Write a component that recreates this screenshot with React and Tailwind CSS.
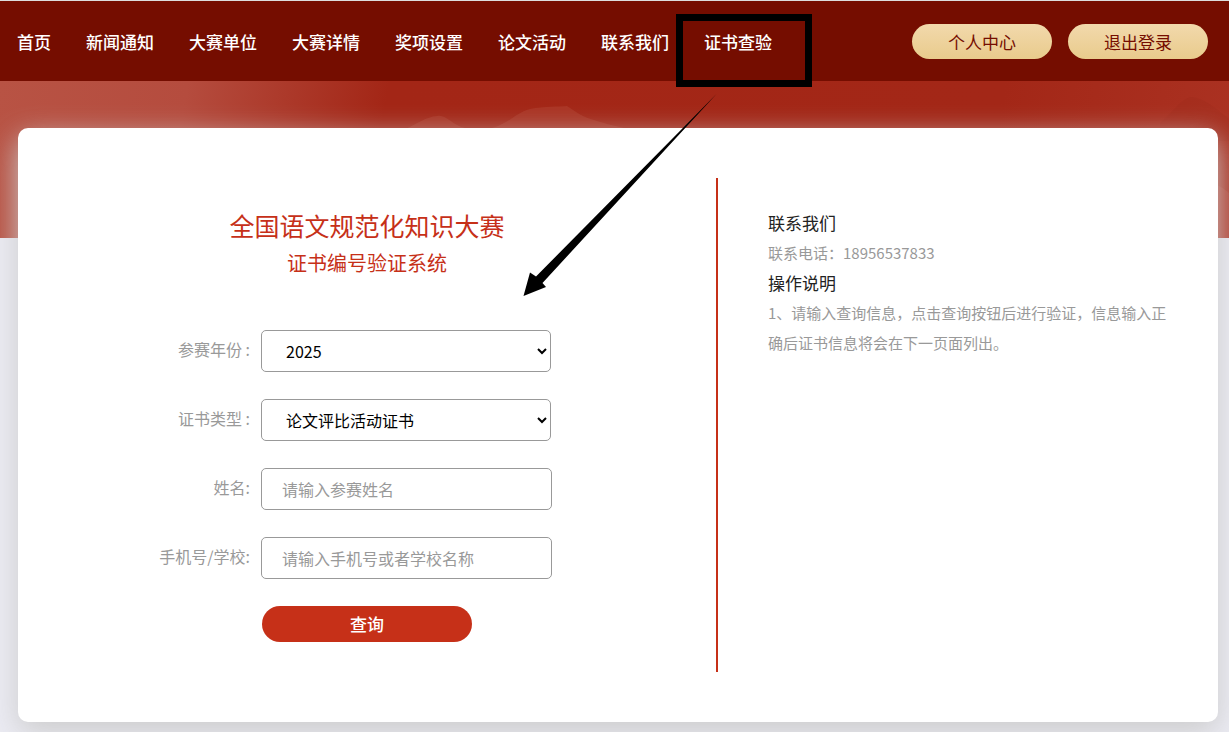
import React from "react";

const NAV = ["首页", "新闻通知", "大赛单位", "大赛详情", "奖项设置", "论文活动", "联系我们"];

const FIELD =
  "h-[42px] rounded-[5px] border border-[#999] bg-white text-[16px] leading-6";

function Row({ id, label, children }) {
  return (
    <div className="flex items-start">
      <label
        htmlFor={id}
        className="w-[232px] shrink-0 text-right text-[16px] leading-[38px] text-[#999]"
      >
        {label}
      </label>
      <div className="pl-[11px]">{children}</div>
    </div>
  );
}

function Header() {
  return (
    <header className="relative z-10 flex h-[81px] items-center justify-between border-t border-[#ddd] bg-[#750d00] pl-[17px] pr-[21px] pt-[2px]">
      <nav className="flex gap-[35px] whitespace-nowrap text-[17px] font-medium leading-6 text-white">
        {NAV.map((item) => (
          <a key={item} href="#">
            {item}
          </a>
        ))}
        <a href="#" className="relative">
          证书查验
          <span className="pointer-events-none absolute -left-7 -top-4 h-[73px] w-[136px] border-[7px] border-black" />
          <svg
            className="pointer-events-none absolute -left-[181px] top-[63px]"
            width="196"
            height="204"
            viewBox="0 0 196 204"
            aria-hidden="true"
          >
            <path
              d="M193.500 1 L13 183.500 L7 179.500 L0.500 203 L23 194 L19.500 190 Z"
              fill="#000"
            />
          </svg>
        </a>
      </nav>
      <div className="flex gap-4 pb-px">
        {["个人中心", "退出登录"].map((text) => (
          <button
            key={text}
            type="button"
            className="h-[35px] w-[140px] cursor-pointer rounded-full bg-linear-to-b from-[#f2d9ac] to-[#e9cb8c] text-[17px] leading-6 text-[#750d00]"
          >
            {text}
          </button>
        ))}
      </div>
    </header>
  );
}

function Banner() {
  return (
    <div className="h-[157px] bg-[linear-gradient(100deg,#b85344_0%,#b54c3e_15%,#a32616_31%,#a32717_80%,#ab3222_100%)]">
      <svg
        className="h-full w-full"
        viewBox="0 0 1229 157"
        preserveAspectRatio="none"
        aria-hidden="true"
      >
        <path
          d="M402 50 C418 42 426 36 437 35 C446 33 452 44 465 47 H492 C510 42 515 32 530 28 C545 25 558 26 567 25 C578 32 582 36 594 39 C606 43 618 46 640 50 V157 H402 Z"
          fill="#b54a3a"
          fillOpacity="0.4"
        />
        <path
          d="M1160 42 C1176 28 1182 17 1192 16 C1205 18 1214 26 1229 38 V60 H1160 Z"
          fill="#98291b"
          fillOpacity="0.2"
        />
        <path d="M1200 157 V104 C1215 100 1222 106 1229 112 V157 Z" fill="#b8483a" fillOpacity="0.5" />
      </svg>
    </div>
  );
}

export default function App() {
  return (
    <div
      className="min-h-screen bg-[#ebebf3]"
      style={{ fontFamily: '"Noto Sans CJK SC", sans-serif' }}
    >
      <Header />
      <Banner />
      <main className="relative -mt-[110px] ml-[18px] mr-[11px] grid grid-cols-[7fr_5fr] rounded-[10px] bg-white py-[50px] shadow-[0_10px_30px_#ccc]">
        <section className="min-h-[494px] border-r-2 border-[#c63018] pt-[29px]">
          <div className="text-center text-[#c63018]">
            <h1 className="text-[25px] leading-9">全国语文规范化知识大赛</h1>
            <h2 className="mt-0.5 text-[20px] leading-9">证书编号验证系统</h2>
          </div>
          <form className="mt-[49px] flex flex-col gap-[27px]">
            <Row id="year" label="参赛年份 :">
              <select id="year" className={FIELD + " w-[290px] pl-5 text-black"}>
                <option>2025</option>
              </select>
            </Row>
            <Row id="type" label="证书类型 :">
              <select id="type" className={FIELD + " w-[290px] pl-5 text-black"}>
                <option>论文评比活动证书</option>
              </select>
            </Row>
            <Row id="name" label="姓名:">
              <input
                id="name"
                placeholder="请输入参赛姓名"
                className={FIELD + " w-[291px] px-5 placeholder:text-[#999]"}
              />
            </Row>
            <Row id="contact" label="手机号/学校:">
              <input
                id="contact"
                placeholder="请输入手机号或者学校名称"
                className={FIELD + " w-[291px] px-5 placeholder:text-[#999]"}
              />
            </Row>
            <button
              type="button"
              className="ml-[244px] h-9 w-[210px] cursor-pointer rounded-full bg-[#c63018] text-[17px] font-medium leading-6 text-white"
            >
              查询
            </button>
          </form>
        </section>
        <aside className="px-[50px] pt-[30px] text-[15px] leading-[30px] text-[#999]">
          <h3 className="text-[17px] leading-[30px] text-[#222]">联系我们</h3>
          <p>联系电话：18956537833</p>
          <h3 className="text-[17px] leading-[30px] text-[#222]">操作说明</h3>
          <p>1、请输入查询信息，点击查询按钮后进行验证，信息输入正确后证书信息将会在下一页面列出。</p>
        </aside>
      </main>
    </div>
  );
}
